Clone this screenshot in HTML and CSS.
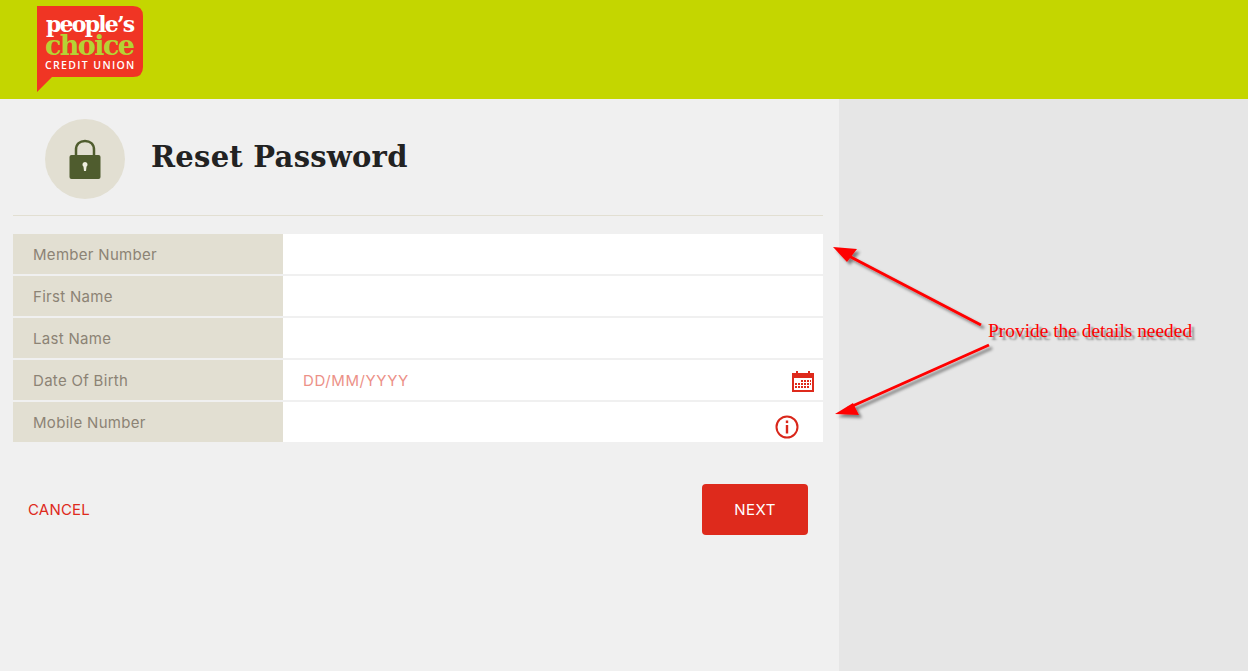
FILE: index.html
```html
<!doctype html>
<html>
<head>
<title>Reset Password</title>
<link rel="stylesheet" href="styles.css">
</head>
<body>
<header id="top">
	<div id="logo">
		<svg class="logo-bubble" width="106" height="86" viewBox="0 0 106 86">
			<path fill="#f03524" d="M0 0H96Q106 0 106 10V61Q106 71 96 71H15L0 86Z"/>
		</svg>
		<div class="logo-peoples">people’s</div>
		<div class="logo-choice">choice</div>
		<div class="logo-credit">CREDIT UNION</div>
	</div>
</header>
<div id="page">
	<main id="panel">
		<div id="title">
			<div id="badge">
				<svg width="32" height="40" viewBox="0 0 32 40">
					<path fill="none" stroke="#4f5c2e" stroke-width="2.500" d="M7 19V11C7 5 11 2 16 2S25 5 25 11V19"/>
					<rect x="0.5" y="16" width="31" height="24" rx="2" fill="#4f5c2e"/>
					<path fill="#efefe0" d="M16 23a2.600 2.600 0 0 1 1.500 4.700L17 32H15L14.500 27.700A2.600 2.600 0 0 1 16 23Z"/>
				</svg>
			</div>
			<h1>Reset Password</h1>
		</div>
		<form id="fields">
			<div class="row"><label>Member Number</label><div class="val"></div></div>
			<div class="row"><label>First Name</label><div class="val"></div></div>
			<div class="row"><label>Last Name</label><div class="val"></div></div>
			<div class="row">
				<label>Date Of Birth</label>
				<div class="val">
					<span class="hint">DD/MM/YYYY</span>
					<svg class="cal" width="22" height="22" viewBox="0 0 22 22">
						<path fill="#de2a1c" d="M0 3H4V1H6V3H16V1H18V3H22V22H0ZM2 8V20H20V8Z"/>
						<path fill="#de2a1c" d="M9 10h2v2H9zM12 10h2v2h-2zM15 10h2v2h-2zM18 10h1v2h-1zM3 13h2v2H3zM6 13h2v2H6zM9 13h2v2H9zM12 13h2v2h-2zM15 13h2v2h-2zM18 13h1v2h-1zM3 16h2v2H3zM6 16h2v2H6zM9 16h2v2H9zM12 16h2v2h-2zM15 16h2v2h-2z"/>
					</svg>
				</div>
			</div>
			<div class="row">
				<label>Mobile Number</label>
				<div class="val">
					<svg class="info" width="24" height="24" viewBox="0 0 24 24">
						<circle cx="12" cy="12" r="10.500" fill="none" stroke="#d9261a" stroke-width="2"/>
						<rect x="10.800" y="5.500" width="2.400" height="2.600" fill="#d9261a"/>
						<rect x="10.800" y="10" width="2.400" height="8.500" fill="#d9261a"/>
					</svg>
				</div>
			</div>
		</form>
		<div id="actions">
			<a class="cancel" href="#">CANCEL</a>
			<a class="next" href="#">NEXT</a>
		</div>
	</main>
	<aside id="side"></aside>
</div>

<!-- annotation drawn over the screenshot -->
<svg id="arrows" width="1248" height="671" viewBox="0 0 1248 671">
	<defs>
		<filter id="drop" x="-20%" y="-20%" width="140%" height="140%">
			<feDropShadow dx="3" dy="3" stdDeviation="1.500" flood-color="#000" flood-opacity="0.45"/>
		</filter>
	</defs>
	<g filter="url(#drop)">
		<path stroke="#f00" stroke-width="3" d="M981 325L845 254"/>
		<path fill="#f00" d="M833 247L857 249L847 262Z"/>
		<path stroke="#f00" stroke-width="3" d="M989 345L848 408"/>
		<path fill="#f00" d="M835 414L853 403L859 415Z"/>
	</g>
</svg>
<div id="note">Provide the details needed</div>
</body>
</html>
```

FILE: styles.css
```css
body {
	margin: 0;
	height: 671px;
	overflow: hidden;
	background-color: #e6e6e6;
	font-family: Inter, sans-serif;
	position: relative;
}
#top {
	height: 99px;
	background-color: #c4d600;
	padding: 6px 0 0 37px;
	box-sizing: border-box;
}
#logo {
	position: relative;
	width: 106px;
	height: 86px;
	font-family: "DejaVu Serif", serif;
	font-weight: bold;
	color: white;
}
.logo-bubble {
	position: absolute;
	left: 0;
	top: 0;
}
.logo-peoples, .logo-choice, .logo-credit {
	position: absolute;
	left: 8px;
	white-space: nowrap;
}
.logo-peoples {
	top: 8px;
	left: 9px;
	font-size: 22px;
	line-height: 20px;
	letter-spacing: -1.800px;
}
.logo-choice {
	top: 29px;
	font-size: 27px;
	line-height: 22px;
	letter-spacing: -1.600px;
	color: #b5d334;
}
.logo-credit {
	top: 52px;
	font-family: "Open Sans", sans-serif;
	font-size: 10.500px;
	line-height: 14px;
	font-weight: 600;
	letter-spacing: 1.350px;
}
#page {
	display: flex;
	height: 572px;
}
#panel {
	width: 839px;
	background-color: #f0f0f0;
	padding: 0 16px 0 13px;
	box-sizing: border-box;
}
#side {
	flex: 1;
}
#title {
	display: flex;
	align-items: center;
	height: 117px;
	padding: 3px 0 0 32px;
	box-sizing: border-box;
	border-bottom: 1px solid #e2dfd2;
}
#badge {
	width: 80px;
	height: 80px;
	border-radius: 50%;
	background-color: #e2dfd2;
	display: flex;
	align-items: center;
	justify-content: center;
}
h1 {
	margin: 0 0 4px 26px;
	font-family: "DejaVu Serif", serif;
	font-size: 29px;
	font-weight: bold;
	letter-spacing: 0.250px;
	color: #222;
}
#fields {
	margin-top: 18px;
	display: flex;
	flex-direction: column;
	gap: 2px;
}
.row {
	display: flex;
	height: 40px;
}
.row label {
	width: 270px;
	background-color: #e2dfd2;
	color: #8c8375;
	font-size: 15px;
	letter-spacing: 0.300px;
	line-height: 42px;
	padding-left: 20px;
	box-sizing: border-box;
}
.val {
	flex: 1;
	background-color: white;
	display: flex;
	align-items: center;
	justify-content: space-between;
	padding: 0 9px 0 20px;
	position: relative;
}
.hint {
	color: #ec9188;
	font-size: 15px;
	letter-spacing: 0.600px;
}
.cal {
	margin: 2px 0 0 auto;
}
.info {
	margin: 10px 15px 0 auto;
}
#actions {
	display: flex;
	align-items: center;
	justify-content: space-between;
	margin-top: 42px;
	padding: 0 15px;
}
.cancel {
	color: #de2a1c;
	font-size: 15px;
	letter-spacing: 0.200px;
	text-decoration: none;
}
.next {
	width: 106px;
	height: 51px;
	line-height: 51px;
	background-color: #de2a1c;
	border-radius: 4px;
	color: white;
	text-align: center;
	font-size: 15px;
	letter-spacing: 0.500px;
	text-decoration: none;
}
#arrows {
	position: absolute;
	left: 0;
	top: 0;
}
#note {
	position: absolute;
	left: 988px;
	top: 320px;
	font-family: "Liberation Serif", serif;
	font-size: 19.400px;
	line-height: 22px;
	color: #f00;
	white-space: nowrap;
	text-shadow: 3px 3px 2px rgba(0, 0, 0, 0.4);
}
```
